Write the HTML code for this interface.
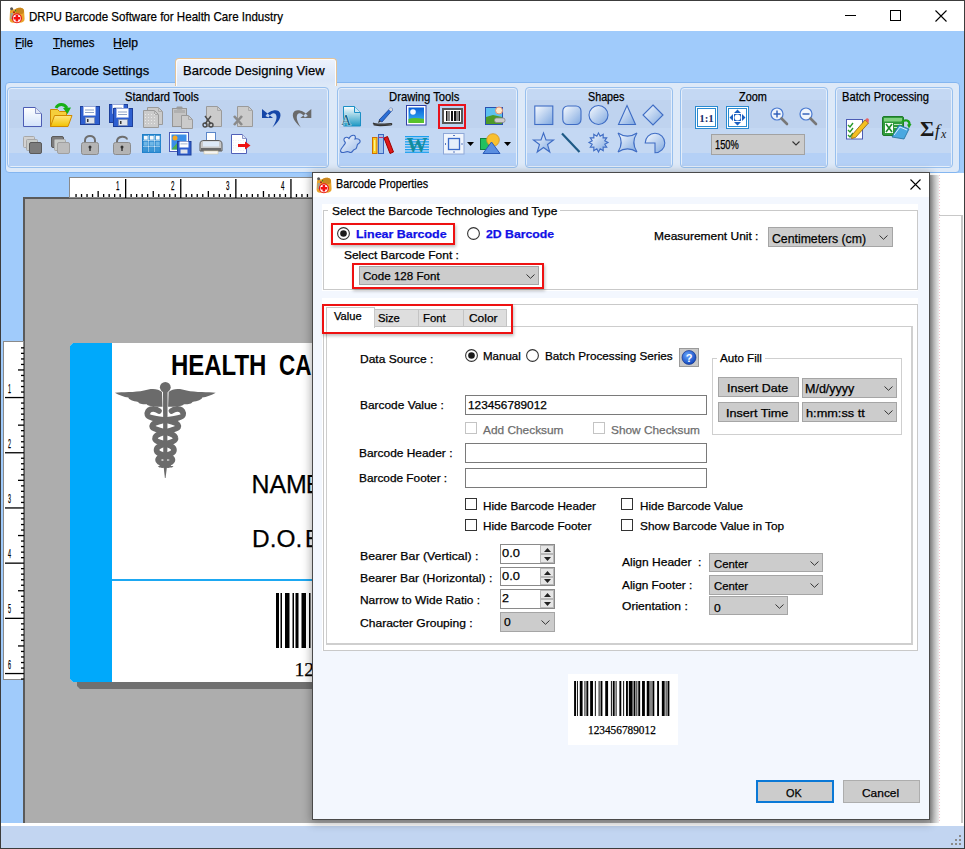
<!DOCTYPE html>
<html><head><meta charset="utf-8"><title>DRPU Barcode Software</title>
<style>
*{box-sizing:border-box;margin:0;padding:0}
html,body{width:965px;height:849px;overflow:hidden;background:#fff}
body{position:relative;font-family:"Liberation Sans",sans-serif;color:#000}
.a{position:absolute;overflow:visible}
.t{position:absolute;white-space:nowrap;line-height:1;transform-origin:0 0;-webkit-text-stroke:0.25px currentColor}
</style></head><body>
<div class="a" style="left:0px;top:0px;width:965px;height:849px;background:#fff"></div>
<div class="a" style="left:1px;top:31px;width:963px;height:793px;background:#a0cbfb"></div>
<div class="t" style="left:29.44px;top:8.74px;font:normal 13.48px 'Liberation Sans';color:#000;transform:scaleX(0.8588);">DRPU Barcode Software for Health Care Industry</div>
<svg class="a" style="left:9px;top:7px;" width="16" height="16" viewBox="0 0 16 16"><path d="M1 4.5C1 2.5 3 2 5 2.5L8 1.5C11 0 14 0.5 15 3L15.6 12C15.6 14.5 13.5 15.8 11 15.8H4C2 15.8 0.6 14.5 0.6 12.5Z" fill="#eaa52c"/>
<path d="M6 2.5C8 0.5 13 0 14.5 2.5 15.5 4.5 15 6.5 13 7L7 6.5Z" fill="#c9861e"/><rect x="1.5" y="6" width="2.5" height="6" fill="#8aa0b8" opacity="0.7"/>
<circle cx="2.6" cy="1.8" r="1.5" fill="#555"/><circle cx="5" cy="5.3" r="1" fill="#a02020"/><circle cx="6.5" cy="3.8" r="0.7" fill="#1a8a1a"/>
<circle cx="7.9" cy="11.3" r="5" fill="#e81818"/><circle cx="7.9" cy="11.3" r="3.9" fill="#fff"/>
<path d="M6.6 8H9.2V10H11.2V12.6H9.2V14.6H6.6V12.6H4.6V10H6.6Z" fill="#f40f0f"/></svg>
<div class="a" style="left:845px;top:15px;width:11px;height:1px;background:#000"></div>
<div class="a" style="left:890px;top:10px;width:11px;height:11px;border:1px solid #000"></div>
<svg class="a" style="left:935px;top:10px;" width="12" height="12" viewBox="0 0 12 12"><path d="M0.5 0.5L11.5 11.5M11.5 0.5L0.5 11.5" stroke="#000" stroke-width="1.1"/></svg>
<div class="t" style="left:15.41px;top:36.01px;font:normal 12.46px 'Liberation Sans';color:#000;transform:scaleX(0.8934);">File</div>
<div class="t" style="left:53.30px;top:36.01px;font:normal 12.46px 'Liberation Sans';color:#000;transform:scaleX(0.9205);">Themes</div>
<div class="t" style="left:113.33px;top:36.01px;font:normal 12.46px 'Liberation Sans';color:#000;transform:scaleX(0.9722);">Help</div>
<div class="a" style="left:16px;top:48px;width:6px;height:1px;background:#000"></div>
<div class="a" style="left:53px;top:48px;width:7px;height:1px;background:#000"></div>
<div class="a" style="left:114px;top:48px;width:8px;height:1px;background:#000"></div>
<div class="t" style="left:51.38px;top:64.18px;font:normal 12.61px 'Liberation Sans';color:#000;transform:scaleX(1.0219);">Barcode Settings</div>
<div class="a" style="left:5px;top:82px;width:955px;height:91px;background:#dde9f8;border:1px solid #84b6f0;border-radius:4px"></div>
<div class="a" style="left:175px;top:58px;width:162px;height:28px;background:linear-gradient(#eef3fc,#d8e5f8 80%,#dde9f8);border:1px solid #e2c39a;border-bottom:none;border-radius:4px 4px 0 0;box-shadow:inset 1px 1px 0 0 #fdfdfe,inset -1px 0 0 0 #fdfdfe"></div>
<div class="t" style="left:183.24px;top:63.32px;font:normal 13.62px 'Liberation Sans';color:#000;transform:scaleX(0.9565);">Barcode Designing View</div>
<div class="a" style="left:7px;top:87px;width:322px;height:81px;background:#c4d8f3;border:1px solid #98c0ee;border-radius:4px;box-shadow:inset 0 0 0 1px #e4eefa"></div>
<div class="a" style="left:9px;top:100px;width:318px;height:28px;background:#bfd3ef"></div>
<div class="a" style="left:9px;top:153px;width:318px;height:13px;background:#b4d0f6"></div>
<div class="a" style="left:337px;top:87px;width:181px;height:81px;background:#c4d8f3;border:1px solid #98c0ee;border-radius:4px;box-shadow:inset 0 0 0 1px #e4eefa"></div>
<div class="a" style="left:339px;top:100px;width:177px;height:28px;background:#bfd3ef"></div>
<div class="a" style="left:339px;top:153px;width:177px;height:13px;background:#b4d0f6"></div>
<div class="a" style="left:525px;top:87px;width:148px;height:81px;background:#c4d8f3;border:1px solid #98c0ee;border-radius:4px;box-shadow:inset 0 0 0 1px #e4eefa"></div>
<div class="a" style="left:527px;top:100px;width:144px;height:28px;background:#bfd3ef"></div>
<div class="a" style="left:527px;top:153px;width:144px;height:13px;background:#b4d0f6"></div>
<div class="a" style="left:680px;top:87px;width:148px;height:81px;background:#c4d8f3;border:1px solid #98c0ee;border-radius:4px;box-shadow:inset 0 0 0 1px #e4eefa"></div>
<div class="a" style="left:682px;top:100px;width:144px;height:28px;background:#bfd3ef"></div>
<div class="a" style="left:682px;top:153px;width:144px;height:13px;background:#b4d0f6"></div>
<div class="a" style="left:835px;top:87px;width:118px;height:81px;background:#c4d8f3;border:1px solid #98c0ee;border-radius:4px;box-shadow:inset 0 0 0 1px #e4eefa"></div>
<div class="a" style="left:837px;top:100px;width:114px;height:28px;background:#bfd3ef"></div>
<div class="a" style="left:837px;top:153px;width:114px;height:13px;background:#b4d0f6"></div>
<div class="t" style="left:125.00px;top:90.47px;font:normal 12.03px 'Liberation Sans';color:#000;transform:scaleX(0.9233);">Standard Tools</div>
<div class="t" style="left:388.60px;top:90.47px;font:normal 12.03px 'Liberation Sans';color:#000;transform:scaleX(0.9370);">Drawing Tools</div>
<div class="t" style="left:588.00px;top:90.47px;font:normal 12.03px 'Liberation Sans';color:#000;transform:scaleX(0.8934);">Shapes</div>
<div class="t" style="left:739.00px;top:90.47px;font:normal 12.03px 'Liberation Sans';color:#000;transform:scaleX(0.9054);">Zoom</div>
<div class="t" style="left:841.70px;top:90.47px;font:normal 12.03px 'Liberation Sans';color:#000;transform:scaleX(0.9298);">Batch Processing</div>
<svg class="a" style="left:22px;top:106px;" width="21" height="22" viewBox="0 0 21 22"><defs><linearGradient id="gdoc" x1="0" y1="0" x2="0" y2="1"><stop offset="0" stop-color="#fff"/><stop offset="1" stop-color="#d2e2fa"/></linearGradient></defs>
<path d="M1.5 1.5H13.5L19.5 7.5V20.5H1.5Z" fill="url(#gdoc)" stroke="#4c5cb4"/><path d="M13.5 1.5V7.5H19.5" fill="#dfe6f6" stroke="#8a96c8"/></svg>
<svg class="a" style="left:49px;top:103px;" width="24" height="25" viewBox="0 0 24 25"><defs><linearGradient id="gfold" x1="0" y1="0" x2="0" y2="1"><stop offset="0" stop-color="#ffe680"/><stop offset="1" stop-color="#f2c200"/></linearGradient></defs>
<path d="M1.5 6.5H8.5L10.5 8.5H17.5V23.5H1.5Z" fill="#f5cf3c" stroke="#d08a00"/>
<path d="M1.5 23.5L5.5 12.5H23L19 23.5Z" fill="url(#gfold)" stroke="#d08a00"/>
<path d="M7 5C9 0.5 15 0 18 5" stroke="#16b016" stroke-width="3" fill="none"/><path d="M14 5L22 4.5L18.5 11Z" fill="#16b016"/></svg>
<svg class="a" style="left:80px;top:106px;" width="21" height="20" viewBox="0 0 21 20"><rect x="0.5" y="0.5" width="19" height="18" fill="#2e5fd0" stroke="#1d3f9a"/><rect x="3.5" y="0.5" width="12" height="9" fill="#fff" stroke="#9fb4e8" stroke-width="0.5"/>
<rect x="5" y="3.5" width="9" height="1" fill="#8fa3c8"/><rect x="5" y="6" width="9" height="1" fill="#8fa3c8"/>
<rect x="5.5" y="11.5" width="9" height="6" fill="#dfe3ea" stroke="#7a8aa8" stroke-width="0.6"/><rect x="7" y="13" width="1.5" height="3" fill="#333"/></svg>
<svg class="a" style="left:109px;top:104px;" width="25" height="24" viewBox="0 0 25 24"><g><rect x="0.5" y="0.5" width="18" height="18" fill="#2e5fd0" stroke="#1d3f9a"/><rect x="3.5" y="0.5" width="11" height="9" fill="#fff" stroke="#9fb4e8" stroke-width="0.5"/>
<rect x="5" y="3.5" width="8" height="1" fill="#8fa3c8"/><rect x="5" y="6" width="8" height="1" fill="#8fa3c8"/>
<rect x="5.5" y="11.5" width="8" height="6" fill="#dfe3ea" stroke="#7a8aa8" stroke-width="0.6"/><rect x="7" y="13" width="1.5" height="3" fill="#333"/></g><g transform="translate(4,4)"><rect x="0.5" y="0.5" width="19" height="18" fill="#2e5fd0" stroke="#1d3f9a"/><rect x="3.5" y="0.5" width="12" height="9" fill="#fff" stroke="#9fb4e8" stroke-width="0.5"/>
<rect x="5" y="3.5" width="9" height="1" fill="#8fa3c8"/><rect x="5" y="6" width="9" height="1" fill="#8fa3c8"/>
<rect x="5.5" y="11.5" width="9" height="6" fill="#dfe3ea" stroke="#7a8aa8" stroke-width="0.6"/><rect x="7" y="13" width="1.5" height="3" fill="#333"/></g></svg>
<svg class="a" style="left:142px;top:107px;" width="22" height="22" viewBox="0 0 22 22"><path d="M5.5 0.5H16.5L20.5 4.5V17.5H5.5Z" fill="#cbcbcb" stroke="#9a9a9a"/><path d="M16.5 0.5V4.5H20.5" fill="none" stroke="#aaa"/><path d="M1.5 3.5H12.5L16.5 7.5V20.5H1.5Z" fill="#cbcbcb" stroke="#9a9a9a"/><path d="M12.5 3.5V7.5H16.5" fill="none" stroke="#aaa"/><g fill="#e8e8e8"><rect x="3" y="7" width="1" height="1"/><rect x="3" y="10" width="1" height="1"/><rect x="3" y="13" width="1" height="1"/><rect x="3" y="16" width="1" height="1"/><rect x="6" y="7" width="1" height="1"/><rect x="6" y="10" width="1" height="1"/><rect x="6" y="13" width="1" height="1"/><rect x="6" y="16" width="1" height="1"/><rect x="9" y="7" width="1" height="1"/><rect x="9" y="10" width="1" height="1"/><rect x="9" y="13" width="1" height="1"/><rect x="9" y="16" width="1" height="1"/><rect x="12" y="7" width="1" height="1"/><rect x="12" y="10" width="1" height="1"/><rect x="12" y="13" width="1" height="1"/><rect x="12" y="16" width="1" height="1"/></g></svg>
<svg class="a" style="left:171px;top:106px;" width="23" height="23" viewBox="0 0 23 23"><rect x="1.5" y="2.5" width="14" height="18" fill="#c4c4c4" stroke="#959595"/><rect x="5.5" y="0.5" width="6" height="3" rx="1" fill="#9a9a9a"/><rect x="3" y="4" width="11" height="3" fill="#b0b0b0"/><path d="M10.5 9.5H17.5L21.5 13.5V22.5H10.5Z" fill="#cbcbcb" stroke="#9a9a9a"/><path d="M17.5 9.5V13.5H21.5" fill="none" stroke="#aaa"/></svg>
<svg class="a" style="left:202px;top:105px;" width="22" height="23" viewBox="0 0 22 23"><path d="M4.5 1.5H15.5L19.5 5.5V21.5H4.5Z" fill="#cbcbcb" stroke="#9a9a9a"/><path d="M15.5 1.5V5.5H19.5" fill="none" stroke="#aaa"/><g stroke="#4a4a4a" stroke-width="1.4" fill="none"><path d="M3 11L9 19M9 11L3 19"/><circle cx="3" cy="20" r="2"/><circle cx="9" cy="20" r="2"/></g></svg>
<svg class="a" style="left:232px;top:105px;" width="22" height="23" viewBox="0 0 22 23"><path d="M5.5 1.5H16.5L20.5 5.5V21.5H5.5Z" fill="#cbcbcb" stroke="#9a9a9a"/><path d="M16.5 1.5V5.5H20.5" fill="none" stroke="#aaa"/><path d="M2 11L10 20M10 11L2 20" stroke="#8a8a8a" stroke-width="2.6"/></svg>
<svg class="a" style="left:260px;top:107px;" width="23" height="22" viewBox="0 0 23 22"><path d="M2 2V11H13Z M5.5 9C9.5 2.5 19 1 20.3 6.5C21.5 11.5 16.5 17 12.4 20.5C15 16.5 17.3 12 16.3 8.5C15.3 5.2 11.5 5.2 8.5 10.5Z" fill="#1546a8"/></svg>
<svg class="a" style="left:291px;top:107px;" width="23" height="22" viewBox="0 0 23 22"><path transform="translate(22.3,0) scale(-1,1)" d="M2 2V11H13Z M5.5 9C9.5 2.5 19 1 20.3 6.5C21.5 11.5 16.5 17 12.4 20.5C15 16.5 17.3 12 16.3 8.5C15.3 5.2 11.5 5.2 8.5 10.5Z" fill="#6a6a6a"/></svg>
<svg class="a" style="left:22px;top:135px;" width="21" height="20" viewBox="0 0 21 20"><rect x="1.5" y="1.5" width="11" height="11" rx="1" fill="#d2d2d2" stroke="#a8a8a8"/><rect x="4.5" y="4.5" width="11" height="11" rx="1" fill="#c8cbc8" stroke="#a8a8a8"/><rect x="7.5" y="7.5" width="12" height="11" rx="1.5" fill="#7c7c7c" stroke="#5a5a5a"/></svg>
<svg class="a" style="left:50px;top:135px;" width="21" height="20" viewBox="0 0 21 20"><rect x="1.5" y="1.5" width="12" height="11" rx="1.5" fill="#7c7c7c" stroke="#5a5a5a"/><rect x="4.5" y="4.5" width="11" height="11" rx="1" fill="#c8cbc8" stroke="#a8a8a8"/><rect x="7.5" y="7.5" width="12" height="11" rx="1.5" fill="#bdbdbd" stroke="#a0a0a0"/></svg>
<svg class="a" style="left:81px;top:135px;" width="19" height="21" viewBox="0 0 19 21"><path d="M4 8V5.5C4 -0.5 14 -0.5 14 5.5V8" stroke="#6e6e6e" stroke-width="2" fill="none"/><rect x="0.5" y="7.5" width="17" height="12" rx="2" fill="#b4b4b4" stroke="#8c8c8c"/><circle cx="9" cy="12" r="1.5" fill="#333"/><rect x="8.3" y="12" width="1.4" height="4" fill="#333"/></svg>
<svg class="a" style="left:113px;top:135px;" width="19" height="21" viewBox="0 0 19 21"><path d="M4 8V6.5C4 0.5 14 0.5 14 4.5" stroke="#6e6e6e" stroke-width="2" fill="none"/><rect x="0.5" y="7.5" width="17" height="12" rx="2" fill="#b4b4b4" stroke="#8c8c8c"/><circle cx="9" cy="12" r="1.5" fill="#333"/><rect x="8.3" y="12" width="1.4" height="4" fill="#333"/></svg>
<svg class="a" style="left:142px;top:134px;" width="20" height="20" viewBox="0 0 20 20"><rect x="0.5" y="0.5" width="18" height="18" fill="#fff" stroke="#1f7fc8"/><rect x="1.5" y="1.5" width="4.6" height="4.6" fill="#f4f8fc" stroke="#2787cf" stroke-width="0.8"/><rect x="7.5" y="1.5" width="4.6" height="4.6" fill="#f4f8fc" stroke="#2787cf" stroke-width="0.8"/><rect x="13.5" y="1.5" width="4.6" height="4.6" fill="#f4f8fc" stroke="#2787cf" stroke-width="0.8"/><rect x="1.5" y="7.5" width="4.6" height="4.6" fill="#6fb7e6" stroke="#2787cf" stroke-width="0.8"/><rect x="7.5" y="7.5" width="4.6" height="4.6" fill="#6fb7e6" stroke="#2787cf" stroke-width="0.8"/><rect x="13.5" y="7.5" width="4.6" height="4.6" fill="#6fb7e6" stroke="#2787cf" stroke-width="0.8"/><rect x="1.5" y="13.5" width="4.6" height="4.6" fill="#3a96d6" stroke="#2787cf" stroke-width="0.8"/><rect x="7.5" y="13.5" width="4.6" height="4.6" fill="#3a96d6" stroke="#2787cf" stroke-width="0.8"/><rect x="13.5" y="13.5" width="4.6" height="4.6" fill="#3a96d6" stroke="#2787cf" stroke-width="0.8"/></svg>
<svg class="a" style="left:169px;top:132px;" width="23" height="24" viewBox="0 0 23 24"><rect x="0.5" y="0.5" width="19" height="19" fill="#fff" stroke="#4a5ab8"/><rect x="2.5" y="2.5" width="15" height="15" fill="#3b8ee8"/><circle cx="6" cy="6" r="2.5" fill="#f5a623"/><path d="M2.5 17.5L8 11 12 15 17.5 10V17.5Z" fill="#4caf50"/><g transform="translate(8,9)"><rect x="0.5" y="0.5" width="13.5" height="13.5" fill="#2e5fd0" stroke="#1d3f9a"/><rect x="2.5" y="0.5" width="9" height="6" fill="#fff"/><rect x="3.5" y="2.5" width="7" height="0.8" fill="#8fa3c8"/><rect x="3.5" y="8.5" width="7" height="4" fill="#dfe3ea"/></g></svg>
<svg class="a" style="left:199px;top:132px;" width="25" height="24" viewBox="0 0 25 24"><rect x="7.5" y="0.5" width="9" height="8" fill="#fff" stroke="#5b87c9"/><path d="M1 19V12C1 9 3 8.5 5 8.5H19C21 8.5 23 9 23 12V19Z" fill="#c8c8c8" stroke="#5a5a5a"/>
<rect x="4" y="9.5" width="16" height="5" fill="#dde9f7"/><rect x="2" y="16" width="20" height="3" fill="#6b6b6b"/><rect x="5" y="19" width="14" height="3" fill="#f5f5f5" stroke="#d8c8a0" stroke-width="0.6"/></svg>
<svg class="a" style="left:230px;top:133px;" width="22" height="22" viewBox="0 0 22 22"><path d="M1.5 1.5H12.5L16.5 5.5V20.5H1.5Z" fill="#fff" stroke="#5060b8"/><path d="M12.5 1.5V5.5H16.5" fill="#dfe6f6" stroke="#8a96c8"/><g fill="#e0e4f0"><rect x="3.0" y="7.0" width="0.8" height="0.8"/><rect x="3.0" y="9.5" width="0.8" height="0.8"/><rect x="3.0" y="12.0" width="0.8" height="0.8"/><rect x="3.0" y="14.5" width="0.8" height="0.8"/><rect x="3.0" y="17.0" width="0.8" height="0.8"/><rect x="5.5" y="7.0" width="0.8" height="0.8"/><rect x="5.5" y="9.5" width="0.8" height="0.8"/><rect x="5.5" y="12.0" width="0.8" height="0.8"/><rect x="5.5" y="14.5" width="0.8" height="0.8"/><rect x="5.5" y="17.0" width="0.8" height="0.8"/><rect x="8.0" y="7.0" width="0.8" height="0.8"/><rect x="8.0" y="9.5" width="0.8" height="0.8"/><rect x="8.0" y="12.0" width="0.8" height="0.8"/><rect x="8.0" y="14.5" width="0.8" height="0.8"/><rect x="8.0" y="17.0" width="0.8" height="0.8"/><rect x="10.5" y="7.0" width="0.8" height="0.8"/><rect x="10.5" y="9.5" width="0.8" height="0.8"/><rect x="10.5" y="12.0" width="0.8" height="0.8"/><rect x="10.5" y="14.5" width="0.8" height="0.8"/><rect x="10.5" y="17.0" width="0.8" height="0.8"/><rect x="13.0" y="7.0" width="0.8" height="0.8"/><rect x="13.0" y="9.5" width="0.8" height="0.8"/><rect x="13.0" y="12.0" width="0.8" height="0.8"/><rect x="13.0" y="14.5" width="0.8" height="0.8"/><rect x="13.0" y="17.0" width="0.8" height="0.8"/></g><path d="M8 11H15V8.5L20.5 12.5 15 16.5V14H8Z" fill="#ee1111"/></svg>
<svg class="a" style="left:340px;top:105px;" width="23" height="23" viewBox="0 0 23 23"><defs><linearGradient id="gta" x1="0" y1="0" x2="0" y2="1"><stop offset="0" stop-color="#fff"/><stop offset="1" stop-color="#1f9ac4"/></linearGradient></defs>
<path d="M3.5 1.5H14.5L20.5 7.5V21H3.5Z" fill="url(#gta)" stroke="#1b8fc4"/><path d="M14.5 1.5V7.5H20.5" fill="#cde8f5" stroke="#1b8fc4"/>
<text x="1" y="20" font-family="Liberation Serif" font-size="14" fill="#0e5f86" stroke="#fff" stroke-width="0.6" paint-order="stroke">A</text></svg>
<svg class="a" style="left:372px;top:106px;" width="23" height="21" viewBox="0 0 23 21"><path d="M7 14L18 2.5C19 1.5 21 2.5 20.5 4L10 16Z" fill="#2a6fd6" stroke="#1a3f90" stroke-width="0.8"/><path d="M18 2.5C19 1.5 21 2.5 20.5 4L19 5.5 16.8 3.5Z" fill="#ddd"/>
<path d="M7 14L6 17 9 15.5" fill="#333"/><path d="M1 17C3 18.5 8 18.5 19 17.5C20 17.4 20 18.6 19 18.8C10 19.8 3 19.5 1.5 18.5" stroke="#333" stroke-width="1.2" fill="#888"/></svg>
<svg class="a" style="left:406px;top:105px;" width="21" height="21" viewBox="0 0 21 21"><defs><linearGradient id="gsky" x1="0" y1="0" x2="0" y2="1"><stop offset="0" stop-color="#0a5fd8"/><stop offset="1" stop-color="#35b6f5"/></linearGradient></defs>
<rect x="0.5" y="0.5" width="19.5" height="19.5" fill="#fff" stroke="#3040a8"/><rect x="2.5" y="2.5" width="15.5" height="15.5" fill="url(#gsky)"/><circle cx="7" cy="7" r="2.8" fill="#f4f8ff"/><path d="M2.5 14C7 12.5 12 13 18 14V18H2.5Z" fill="#58c22c"/></svg>
<div class="a" style="left:438px;top:104px;width:28px;height:25px;border:2px solid #e8121c;background:#bcd4f0"></div>
<svg class="a" style="left:442px;top:108px;" width="21" height="16" viewBox="0 0 21 16"><rect x="1" y="1" width="19" height="14" fill="#fff" stroke="#555" stroke-width="2"/><rect x="4" y="3" width="1.5" height="10" fill="#111"/><rect x="6.5" y="3" width="1" height="10" fill="#111"/><rect x="9" y="3" width="2" height="10" fill="#111"/><rect x="12" y="3" width="2.5" height="10" fill="#111"/><rect x="15.5" y="3" width="1" height="10" fill="#111"/><rect x="17" y="3" width="1" height="10" fill="#111"/></svg>
<svg class="a" style="left:484px;top:106px;" width="22" height="20" viewBox="0 0 22 20"><rect x="1.5" y="1.5" width="17" height="17" fill="#5dc0ef" stroke="#2850b0"/><path d="M2 11L9 9 18 11V18H2Z" fill="#4c9a28"/><circle cx="15" cy="4.5" r="3.5" fill="#fde8c8" stroke="#e89070"/><rect x="10.5" y="12" width="10.5" height="4.5" rx="2" fill="#ccc" stroke="#888" stroke-width="0.8"/></svg>
<svg class="a" style="left:339px;top:133px;" width="24" height="22" viewBox="0 0 24 22"><defs><linearGradient id="gblob" x1="0" y1="0" x2="1" y2="1"><stop offset="0" stop-color="#f4f8ff"/><stop offset="1" stop-color="#9fbde8"/></linearGradient></defs>
<path d="M6 9C3 6 7 2.5 10 5.5C12 1 18 1 16 6C21 5 23 9 19 11C17 12.5 19 16 15.5 16.5C13 17 14 21 10 19C7 17.5 4 21 2 19C0 17 4 14 5 12C6 11 7 10 6 9Z" fill="url(#gblob)" stroke="#3a66c0" stroke-width="1.1"/></svg>
<svg class="a" style="left:370px;top:133px;" width="25" height="22" viewBox="0 0 25 22"><rect x="2.5" y="4.5" width="4.5" height="16" fill="#f8d020" stroke="#d07000"/><rect x="4.2" y="7" width="1" height="11" fill="#fff7b0"/><rect x="8.5" y="1.5" width="5" height="19" fill="#9ec0ec" stroke="#3a66c0"/><rect x="8.8" y="4" width="4.4" height="1" fill="#c03070"/>
<path d="M14 5L17.5 3.5 23.5 19 20 20.5Z" fill="#e01818" stroke="#900"/></svg>
<svg class="a" style="left:405px;top:134px;" width="24" height="20" viewBox="0 0 24 20"><rect x="0" y="2.0" width="24" height="1.3" fill="#1aa0f0"/><rect x="0" y="4.6" width="24" height="1.3" fill="#1aa0f0"/><rect x="0" y="7.2" width="24" height="1.3" fill="#1aa0f0"/><rect x="0" y="9.8" width="24" height="1.3" fill="#1aa0f0"/><rect x="0" y="12.4" width="24" height="1.3" fill="#1aa0f0"/><rect x="0" y="15.0" width="24" height="1.3" fill="#1aa0f0"/><rect x="0" y="17.6" width="24" height="1.3" fill="#1aa0f0"/><text x="12" y="18" text-anchor="middle" font-family="Liberation Serif" font-weight="bold" font-size="21" fill="#138c9c">W</text></svg>
<svg class="a" style="left:443px;top:133px;" width="22" height="22" viewBox="0 0 22 22"><rect x="0.5" y="0.5" width="20.5" height="20.5" fill="#f0f5fc" stroke="#8fa8d8"/><rect x="5.5" y="5.5" width="11" height="11" fill="#e4eefa" stroke="#3a6ac8" stroke-width="1.3"/>
<rect x="10" y="2" width="2" height="1" fill="#5a7ac0"/><rect x="10" y="18.5" width="2" height="1" fill="#5a7ac0"/><rect x="2" y="10" width="1" height="2" fill="#5a7ac0"/><rect x="18.5" y="10" width="1" height="2" fill="#5a7ac0"/></svg>
<svg class="a" style="left:467px;top:142px;" width="7" height="4" viewBox="0 0 7 4"><path d="M0 0H7L3.5 4Z" fill="#000"/></svg>
<svg class="a" style="left:480px;top:133px;" width="21" height="22" viewBox="0 0 21 22"><rect x="0.5" y="5.5" width="8" height="11" fill="#22c060" stroke="#108040"/><circle cx="13" cy="7" r="6.3" fill="#f8c030" stroke="#d09020" stroke-width="0.8"/>
<path d="M3 20.5L11.5 9 20 20.5Z" fill="#5a8ee0" stroke="#2a5ab8"/></svg>
<svg class="a" style="left:504px;top:142px;" width="7" height="4" viewBox="0 0 7 4"><path d="M0 0H7L3.5 4Z" fill="#000"/></svg>
<svg class="a" style="left:534px;top:105px;" width="20" height="21" viewBox="0 0 20 21"><defs><linearGradient id="gsh" x1="0" y1="0" x2="1" y2="1"><stop offset="0" stop-color="#f8fbff"/><stop offset="1" stop-color="#7fa8e0"/></linearGradient></defs><rect x="0.8" y="1" width="18" height="18.5" fill="url(#gsh)" stroke="#3e6cc4" stroke-width="1.1"/></svg>
<svg class="a" style="left:562px;top:105px;" width="20" height="21" viewBox="0 0 20 21"><rect x="0.8" y="1" width="18.2" height="18.5" rx="5" fill="url(#gsh)" stroke="#3e6cc4" stroke-width="1.1"/></svg>
<svg class="a" style="left:588px;top:104px;" width="21" height="22" viewBox="0 0 21 22"><circle cx="10.5" cy="11" r="9.5" fill="url(#gsh)" stroke="#3e6cc4" stroke-width="1.1"/></svg>
<svg class="a" style="left:617px;top:104px;" width="20" height="22" viewBox="0 0 20 22"><path d="M10 1.5L18.5 20.5H1.5Z" fill="url(#gsh)" stroke="#3e6cc4" stroke-width="1.1"/></svg>
<svg class="a" style="left:642px;top:104px;" width="22" height="22" viewBox="0 0 22 22"><path d="M11 1L21 11 11 21 1 11Z" fill="url(#gsh)" stroke="#3e6cc4" stroke-width="1.1"/></svg>
<svg class="a" style="left:533px;top:132px;" width="21" height="21" viewBox="0 0 21 21"><path d="M10.5 1L13 8H20.5L14.5 12.5 16.8 20 10.5 15.5 4.2 20 6.5 12.5 0.5 8H8Z" fill="url(#gsh)" stroke="#3e6cc4" stroke-width="1.1"/></svg>
<svg class="a" style="left:560px;top:132px;" width="21" height="21" viewBox="0 0 21 21"><path d="M2 1.5L19.5 20" stroke="#1e5a86" stroke-width="2.2"/></svg>
<svg class="a" style="left:588px;top:132px;" width="21" height="21" viewBox="0 0 21 21"><polygon points="10.50,1.00 12.18,4.22 15.25,2.27 15.10,5.90 18.73,5.75 16.78,8.82 20.00,10.50 16.78,12.18 18.73,15.25 15.10,15.10 15.25,18.73 12.18,16.78 10.50,20.00 8.82,16.78 5.75,18.73 5.90,15.10 2.27,15.25 4.22,12.18 1.00,10.50 4.22,8.82 2.27,5.75 5.90,5.90 5.75,2.27 8.82,4.22" fill="url(#gsh)" stroke="#3e6cc4" stroke-width="1.1"/></svg>
<svg class="a" style="left:617px;top:132px;" width="21" height="21" viewBox="0 0 21 21"><path d="M1 1C7 5 14 5 20 1 16 7 16 14 20 20 14 16 7 16 1 20 5 14 5 7 1 1Z" fill="url(#gsh)" stroke="#3e6cc4" stroke-width="1.1"/></svg>
<svg class="a" style="left:644px;top:132px;" width="22" height="22" viewBox="0 0 22 22"><path d="M1.2 11A9.8 9.8 0 1 1 11 20.8V11Z" fill="url(#gsh)" stroke="#3e6cc4" stroke-width="1.1"/></svg>
<svg class="a" style="left:695px;top:106px;" width="24" height="24" viewBox="0 0 24 24"><rect x="0.5" y="0.5" width="22" height="22" fill="#fff" stroke="#2a8ad0"/><rect x="2.5" y="2.5" width="18" height="18" fill="#fff" stroke="#2a8ad0"/>
<text x="11.5" y="16" text-anchor="middle" font-family="Liberation Serif" font-weight="bold" font-size="11" fill="#1a2f6a">1:1</text></svg>
<svg class="a" style="left:726px;top:106px;" width="24" height="24" viewBox="0 0 24 24"><rect x="0.5" y="0.5" width="22" height="22" fill="#fff" stroke="#2a8ad0"/><rect x="2.5" y="2.5" width="18" height="18" fill="#fff" stroke="#2a8ad0"/>
<path d="M11.5 3.5L15 7H8Z M11.5 19.5L15 16H8Z M3.5 11.5L7 8V15Z M19.5 11.5L16 8V15Z" fill="#1a5fc0"/><rect x="8" y="8" width="7" height="7" fill="#1a5fc0"/><circle cx="11.5" cy="11.5" r="3" fill="#fff"/></svg>
<svg class="a" style="left:770px;top:107px;" width="19" height="19" viewBox="0 0 19 19"><circle cx="7" cy="7" r="6" fill="#eef4fc" stroke="#4a7ad0" stroke-width="1.2"/><path d="M11.5 11.5L17 17" stroke="#777" stroke-width="2.6" stroke-linecap="round"/><rect x="3.5" y="6.3" width="7" height="1.4" fill="#2a5ab8"/><rect x="6.3" y="3.5" width="1.4" height="7" fill="#2a5ab8"/></svg>
<svg class="a" style="left:799px;top:107px;" width="19" height="19" viewBox="0 0 19 19"><circle cx="7" cy="7" r="6" fill="#eef4fc" stroke="#4a7ad0" stroke-width="1.2"/><path d="M11.5 11.5L17 17" stroke="#777" stroke-width="2.6" stroke-linecap="round"/><rect x="3.5" y="6.3" width="7" height="1.4" fill="#2a5ab8"/></svg>
<div class="a" style="left:711px;top:134px;width:94px;height:21px;background:#cccccc;border:1px solid #a2a2a2"></div>
<div class="t" style="left:715.00px;top:137.16px;font:normal 12.75px 'Liberation Sans';color:#000;transform:scaleX(0.7282);">150%</div>
<svg class="a" style="left:792px;top:141px;" width="8" height="5" viewBox="0 0 8 5"><path d="M0.5 0.5L4 4 7.5 0.5" stroke="#333" fill="none" stroke-width="1.1"/></svg>
<svg class="a" style="left:845px;top:116px;" width="25" height="24" viewBox="0 0 25 24"><rect x="1.5" y="3.5" width="16" height="19.5" fill="#fff" stroke="#4c5cb4"/><path d="M3 9L5 11 8 7M3 14L5 16 8 12M3 19L5 21 8 17" stroke="#2a9a2a" stroke-width="1.4" fill="none"/>
<path d="M7 19L20 4 23.5 7 10.5 21.5 6.5 22.5Z" fill="#f4c020" stroke="#8a6010" stroke-width="0.8"/><path d="M20 4L21.5 2.5C22.5 1.5 24.5 3 23.8 4.5L23.5 7Z" fill="#e86060"/></svg>
<svg class="a" style="left:882px;top:116px;" width="30" height="24" viewBox="0 0 30 24"><rect x="0.5" y="0.5" width="21" height="19" rx="1.5" fill="#2f9a3a" stroke="#1e7a2a"/><rect x="2" y="2" width="18" height="3.5" fill="#7fd07f"/>
<rect x="3" y="7" width="8" height="10" fill="#fff"/><path d="M4 8L10 16M10 8L4 16" stroke="#1e8a2a" stroke-width="1.6"/><rect x="12" y="8" width="8" height="1" fill="#bfe8bf"/><rect x="12" y="11" width="8" height="1" fill="#bfe8bf"/>
<path d="M10 21L17 9 27 13 22 23Z" fill="#4aa8e0" stroke="#1f6f9c" stroke-width="0.8"/><path d="M12 19L18 11 25 14" stroke="#d8f0ff" stroke-width="1" fill="none"/><path d="M20 6C23 3 28 4 27.5 9" stroke="#1aa01a" stroke-width="2.2" fill="none"/><path d="M25 8.5L29.5 8 27 12.5Z" fill="#1aa01a"/></svg>
<svg class="a" style="left:919px;top:116px;" width="32" height="24" viewBox="0 0 32 24"><text x="1" y="20" font-family="Liberation Serif" font-weight="bold" font-size="22" fill="#1a1a1a">&#931;</text><text x="16" y="20" font-family="Liberation Serif" font-style="italic" font-size="17" fill="#1a1a1a">f</text><text x="22" y="22" font-family="Liberation Serif" font-style="italic" font-size="12" fill="#1a1a1a">x</text></svg>
<div class="a" style="left:23px;top:197px;width:907px;height:626px;background:#adadad;border-left:2px solid #5a5a5a;border-top:2px solid #5a5a5a"></div>
<svg class="a" style="left:69px;top:177px;" width="262" height="21" viewBox="0 0 262 21"><rect x="0.5" y="0.5" width="260" height="20" fill="#fff" stroke="#8a8a8a"/><rect x="6.4" y="17" width="1.3" height="3" fill="#000"/><rect x="11.9" y="17" width="1.3" height="3" fill="#000"/><rect x="17.4" y="17" width="1.3" height="3" fill="#000"/><rect x="22.9" y="17" width="1.3" height="3" fill="#000"/><rect x="28.5" y="14" width="1.3" height="6" fill="#000"/><rect x="34.0" y="17" width="1.3" height="3" fill="#000"/><rect x="39.5" y="17" width="1.3" height="3" fill="#000"/><rect x="45.0" y="17" width="1.3" height="3" fill="#000"/><rect x="50.5" y="17" width="1.3" height="3" fill="#000"/><rect x="56.0" y="2" width="1.3" height="19" fill="#000"/><rect x="61.5" y="17" width="1.3" height="3" fill="#000"/><rect x="67.0" y="17" width="1.3" height="3" fill="#000"/><rect x="72.5" y="17" width="1.3" height="3" fill="#000"/><rect x="78.0" y="17" width="1.3" height="3" fill="#000"/><rect x="83.6" y="14" width="1.3" height="6" fill="#000"/><rect x="89.1" y="17" width="1.3" height="3" fill="#000"/><rect x="94.6" y="17" width="1.3" height="3" fill="#000"/><rect x="100.1" y="17" width="1.3" height="3" fill="#000"/><rect x="105.6" y="17" width="1.3" height="3" fill="#000"/><rect x="111.1" y="2" width="1.3" height="19" fill="#000"/><rect x="116.6" y="17" width="1.3" height="3" fill="#000"/><rect x="122.1" y="17" width="1.3" height="3" fill="#000"/><rect x="127.6" y="17" width="1.3" height="3" fill="#000"/><rect x="133.1" y="17" width="1.3" height="3" fill="#000"/><rect x="138.7" y="14" width="1.3" height="6" fill="#000"/><rect x="144.2" y="17" width="1.3" height="3" fill="#000"/><rect x="149.7" y="17" width="1.3" height="3" fill="#000"/><rect x="155.2" y="17" width="1.3" height="3" fill="#000"/><rect x="160.7" y="17" width="1.3" height="3" fill="#000"/><rect x="166.2" y="2" width="1.3" height="19" fill="#000"/><rect x="171.7" y="17" width="1.3" height="3" fill="#000"/><rect x="177.2" y="17" width="1.3" height="3" fill="#000"/><rect x="182.7" y="17" width="1.3" height="3" fill="#000"/><rect x="188.2" y="17" width="1.3" height="3" fill="#000"/><rect x="193.8" y="14" width="1.3" height="6" fill="#000"/><rect x="199.3" y="17" width="1.3" height="3" fill="#000"/><rect x="204.8" y="17" width="1.3" height="3" fill="#000"/><rect x="210.3" y="17" width="1.3" height="3" fill="#000"/><rect x="215.8" y="17" width="1.3" height="3" fill="#000"/><rect x="221.3" y="2" width="1.3" height="19" fill="#000"/><rect x="226.8" y="17" width="1.3" height="3" fill="#000"/><rect x="232.3" y="17" width="1.3" height="3" fill="#000"/><rect x="237.8" y="17" width="1.3" height="3" fill="#000"/><rect x="243.3" y="17" width="1.3" height="3" fill="#000"/><rect x="248.9" y="14" width="1.3" height="6" fill="#000"/><rect x="254.4" y="17" width="1.3" height="3" fill="#000"/><rect x="259.9" y="17" width="1.3" height="3" fill="#000"/></svg>
<div class="t" style="left:116.00px;top:179.37px;font:normal 12.03px 'Liberation Sans';color:#000;transform:scaleX(0.5143);">1</div>
<div class="t" style="left:171.10px;top:179.37px;font:normal 12.03px 'Liberation Sans';color:#000;transform:scaleX(0.5143);">2</div>
<div class="t" style="left:226.20px;top:179.37px;font:normal 12.03px 'Liberation Sans';color:#000;transform:scaleX(0.5143);">3</div>
<div class="t" style="left:281.30px;top:179.37px;font:normal 12.03px 'Liberation Sans';color:#000;transform:scaleX(0.5143);">4</div>
<svg class="a" style="left:3px;top:341px;" width="21" height="338" viewBox="0 0 21 338"><rect x="0.5" y="0.5" width="20" height="338" fill="#fff" stroke="#8a8a8a"/><rect x="18" y="6.2" width="3" height="1.3" fill="#000"/><rect x="18" y="11.7" width="3" height="1.3" fill="#000"/><rect x="18" y="17.3" width="3" height="1.3" fill="#000"/><rect x="18" y="22.8" width="3" height="1.3" fill="#000"/><rect x="15" y="28.3" width="6" height="1.3" fill="#000"/><rect x="18" y="33.8" width="3" height="1.3" fill="#000"/><rect x="18" y="39.3" width="3" height="1.3" fill="#000"/><rect x="18" y="44.9" width="3" height="1.3" fill="#000"/><rect x="18" y="50.4" width="3" height="1.3" fill="#000"/><rect x="2" y="55.9" width="19" height="1.3" fill="#000"/><rect x="18" y="61.4" width="3" height="1.3" fill="#000"/><rect x="18" y="66.9" width="3" height="1.3" fill="#000"/><rect x="18" y="72.5" width="3" height="1.3" fill="#000"/><rect x="18" y="78.0" width="3" height="1.3" fill="#000"/><rect x="15" y="83.5" width="6" height="1.3" fill="#000"/><rect x="18" y="89.0" width="3" height="1.3" fill="#000"/><rect x="18" y="94.5" width="3" height="1.3" fill="#000"/><rect x="18" y="100.1" width="3" height="1.3" fill="#000"/><rect x="18" y="105.6" width="3" height="1.3" fill="#000"/><rect x="2" y="111.1" width="19" height="1.3" fill="#000"/><rect x="18" y="116.6" width="3" height="1.3" fill="#000"/><rect x="18" y="122.1" width="3" height="1.3" fill="#000"/><rect x="18" y="127.7" width="3" height="1.3" fill="#000"/><rect x="18" y="133.2" width="3" height="1.3" fill="#000"/><rect x="15" y="138.7" width="6" height="1.3" fill="#000"/><rect x="18" y="144.2" width="3" height="1.3" fill="#000"/><rect x="18" y="149.7" width="3" height="1.3" fill="#000"/><rect x="18" y="155.3" width="3" height="1.3" fill="#000"/><rect x="18" y="160.8" width="3" height="1.3" fill="#000"/><rect x="2" y="166.3" width="19" height="1.3" fill="#000"/><rect x="18" y="171.8" width="3" height="1.3" fill="#000"/><rect x="18" y="177.3" width="3" height="1.3" fill="#000"/><rect x="18" y="182.9" width="3" height="1.3" fill="#000"/><rect x="18" y="188.4" width="3" height="1.3" fill="#000"/><rect x="15" y="193.9" width="6" height="1.3" fill="#000"/><rect x="18" y="199.4" width="3" height="1.3" fill="#000"/><rect x="18" y="204.9" width="3" height="1.3" fill="#000"/><rect x="18" y="210.5" width="3" height="1.3" fill="#000"/><rect x="18" y="216.0" width="3" height="1.3" fill="#000"/><rect x="2" y="221.5" width="19" height="1.3" fill="#000"/><rect x="18" y="227.0" width="3" height="1.3" fill="#000"/><rect x="18" y="232.5" width="3" height="1.3" fill="#000"/><rect x="18" y="238.1" width="3" height="1.3" fill="#000"/><rect x="18" y="243.6" width="3" height="1.3" fill="#000"/><rect x="15" y="249.1" width="6" height="1.3" fill="#000"/><rect x="18" y="254.6" width="3" height="1.3" fill="#000"/><rect x="18" y="260.1" width="3" height="1.3" fill="#000"/><rect x="18" y="265.7" width="3" height="1.3" fill="#000"/><rect x="18" y="271.2" width="3" height="1.3" fill="#000"/><rect x="2" y="276.7" width="19" height="1.3" fill="#000"/><rect x="18" y="282.2" width="3" height="1.3" fill="#000"/><rect x="18" y="287.7" width="3" height="1.3" fill="#000"/><rect x="18" y="293.3" width="3" height="1.3" fill="#000"/><rect x="18" y="298.8" width="3" height="1.3" fill="#000"/><rect x="15" y="304.3" width="6" height="1.3" fill="#000"/><rect x="18" y="309.8" width="3" height="1.3" fill="#000"/><rect x="18" y="315.3" width="3" height="1.3" fill="#000"/><rect x="18" y="320.9" width="3" height="1.3" fill="#000"/><rect x="18" y="326.4" width="3" height="1.3" fill="#000"/><rect x="2" y="331.9" width="19" height="1.3" fill="#000"/><rect x="18" y="337.4" width="3" height="1.3" fill="#000"/></svg>
<div class="t" style="left:8.40px;top:381.66px;font:normal 12.17px 'Liberation Sans';color:#000;transform:scaleX(0.4429);">1</div>
<div class="t" style="left:8.40px;top:436.86px;font:normal 12.17px 'Liberation Sans';color:#000;transform:scaleX(0.4429);">2</div>
<div class="t" style="left:8.40px;top:492.06px;font:normal 12.17px 'Liberation Sans';color:#000;transform:scaleX(0.4429);">3</div>
<div class="t" style="left:8.40px;top:547.26px;font:normal 12.17px 'Liberation Sans';color:#000;transform:scaleX(0.4429);">4</div>
<div class="t" style="left:8.40px;top:602.46px;font:normal 12.17px 'Liberation Sans';color:#000;transform:scaleX(0.4429);">5</div>
<div class="t" style="left:8.40px;top:657.66px;font:normal 12.17px 'Liberation Sans';color:#000;transform:scaleX(0.4429);">6</div>
<div class="a" style="left:77px;top:350px;width:400px;height:339px;background:#707070;clip-path:polygon(3px 0,100% 0,100% 100%,3px 100%,0 calc(100% - 3px),0 3px)"></div>
<div class="a" style="left:70px;top:343px;width:400px;height:339px;background:#fff;clip-path:polygon(3px 0,100% 0,100% 100%,3px 100%,0 calc(100% - 3px),0 3px)"></div>
<div class="a" style="left:70px;top:343px;width:42px;height:339px;background:#00a9fb;clip-path:polygon(3px 0,100% 0,100% 100%,3px 100%,0 calc(100% - 3px),0 3px)"></div>
<div class="a" style="left:112px;top:579px;width:360px;height:2px;background:#1da8f2"></div>
<div class="t" style="left:170.58px;top:347.89px;font:bold 29.42px 'Liberation Sans';color:#000;transform:scaleX(0.8151);-webkit-text-stroke:0;">HEALTH</div>
<div class="t" style="left:279.44px;top:347.89px;font:bold 29.42px 'Liberation Sans';color:#000;transform:scaleX(0.7639);-webkit-text-stroke:0;">CA</div>
<div class="t" style="left:251.50px;top:470.11px;font:normal 24.93px 'Liberation Sans';color:#000;">NAM</div>
<div class="t" style="left:305.71px;top:470.11px;font:normal 24.93px 'Liberation Sans';color:#000;transform:scaleX(0.8929);">E</div>
<div class="t" style="left:252.47px;top:525.30px;font:normal 23.77px 'Liberation Sans';color:#000;transform:scaleX(1.0270);">D.O.</div>
<div class="t" style="left:304.54px;top:525.30px;font:normal 23.77px 'Liberation Sans';color:#000;transform:scaleX(0.9643);">B</div>
<div class="t" style="left:294.40px;top:658.06px;font:normal 19.69px 'Liberation Serif';color:#000;">12</div>
<svg class="a" style="left:110px;top:378px;" width="112" height="104" viewBox="0 0 112 104"><g fill="#6b6b6b">
<circle cx="55.3" cy="9.3" r="5.4"/>
<path d="M53 12H57.6L57.3 86L55.6 100 54.9 100 53.3 86Z"/>
<path d="M52 14C48 10 40 10.5 34 12.5C25 14.5 12 14 4.9 14.7C9 17 14 19 18.4 19.6C18.5 21.5 23 23.5 28.2 23.9C28.5 25.5 33 26.5 36.8 26.3C37 28 44 29 52.5 28.8Z"/>
<path transform="translate(110.6,0) scale(-1,1)" d="M52 14C48 10 40 10.5 34 12.5C25 14.5 12 14 4.9 14.7C9 17 14 19 18.4 19.6C18.5 21.5 23 23.5 28.2 23.9C28.5 25.5 33 26.5 36.8 26.3C37 28 44 29 52.5 28.8Z"/>
<path d="M47.8 88L63.5 88 62 89.6 49.3 89.6Z"/>
</g>
<g fill="none" stroke="#6b6b6b" stroke-width="5.6" stroke-linecap="round">
<path d="M49 33C44 29 36 31 37.5 37C39 42 64 41 68 47C72 53 46 53 45 60C44 66 64 65 64 72C64 78 48 77 48 82C48 86 57 86 58 87"/>
<path d="M61.5 33C66.5 29 74.5 31 73 37C71.5 42 46.5 41 42.5 47C38.5 53 64.5 53 65.5 60C66.5 66 46.5 65 46.5 72C46.5 78 62.5 77 62.5 82C62.5 86 53.5 86 52.5 87"/>
</g></svg>
<svg class="a" style="left:0px;top:0px;pointer-events:none" width="965" height="849" viewBox="0 0 965 849"><rect x="276.00" y="593" width="3.00" height="55" fill="#000"/><rect x="280.50" y="593" width="1.50" height="55" fill="#000"/><rect x="285.00" y="593" width="4.50" height="55" fill="#000"/><rect x="292.50" y="593" width="1.50" height="55" fill="#000"/><rect x="295.50" y="593" width="3.00" height="55" fill="#000"/><rect x="301.50" y="593" width="4.50" height="55" fill="#000"/><rect x="309.00" y="593" width="1.50" height="55" fill="#000"/><rect x="315.00" y="593" width="1.50" height="55" fill="#000"/><rect x="318.00" y="593" width="3.00" height="55" fill="#000"/><rect x="325.50" y="593" width="4.50" height="55" fill="#000"/><rect x="334.50" y="593" width="1.50" height="55" fill="#000"/><rect x="337.50" y="593" width="3.00" height="55" fill="#000"/><rect x="342.00" y="593" width="1.50" height="55" fill="#000"/><rect x="348.00" y="593" width="3.00" height="55" fill="#000"/><rect x="354.00" y="593" width="1.50" height="55" fill="#000"/><rect x="358.50" y="593" width="3.00" height="55" fill="#000"/><rect x="363.00" y="593" width="6.00" height="55" fill="#000"/><rect x="370.50" y="593" width="3.00" height="55" fill="#000"/><rect x="375.00" y="593" width="1.50" height="55" fill="#000"/><rect x="378.00" y="593" width="3.00" height="55" fill="#000"/><rect x="384.00" y="593" width="4.50" height="55" fill="#000"/><rect x="391.50" y="593" width="4.50" height="55" fill="#000"/><rect x="397.50" y="593" width="1.50" height="55" fill="#000"/><rect x="400.50" y="593" width="3.00" height="55" fill="#000"/><rect x="408.00" y="593" width="3.00" height="55" fill="#000"/><rect x="415.50" y="593" width="4.50" height="55" fill="#000"/><rect x="421.50" y="593" width="1.50" height="55" fill="#000"/><rect x="424.50" y="593" width="3.00" height="55" fill="#000"/></svg>
<div class="a" style="left:930px;top:173px;width:34px;height:650px;background:#fff"></div>
<div class="a" style="left:961px;top:215px;width:2px;height:608px;background:#c8c8c8"></div>
<div class="a" style="left:930px;top:215px;width:32px;height:1px;background:#c8c8c8"></div>
<div class="a" style="left:930px;top:175px;width:9px;height:648px;background:linear-gradient(90deg,#9a9a9a,#c8c8c8 45%,#f0f0f0)"></div>
<div class="a" style="left:939px;top:175px;width:1px;height:648px;background:repeating-linear-gradient(#f4c8d0 0 1px,transparent 1px 3px)"></div>
<div class="a" style="left:1px;top:823px;width:963px;height:3px;background:#fff"></div>
<div class="a" style="left:1px;top:826px;width:963px;height:22px;background:#c2d5f1"></div>
<div class="a" style="left:0px;top:848px;width:965px;height:1px;background:#3c3c3c"></div>
<div class="a" style="left:959px;top:835px;width:2px;height:2px;background:#8a8a8a"></div>
<div class="a" style="left:955px;top:839px;width:2px;height:2px;background:#8a8a8a"></div>
<div class="a" style="left:959px;top:839px;width:2px;height:2px;background:#8a8a8a"></div>
<div class="a" style="left:951px;top:843px;width:2px;height:2px;background:#8a8a8a"></div>
<div class="a" style="left:955px;top:843px;width:2px;height:2px;background:#8a8a8a"></div>
<div class="a" style="left:959px;top:843px;width:2px;height:2px;background:#8a8a8a"></div>
<div class="a" style="left:0px;top:0px;width:965px;height:1px;background:#3c3c3c"></div>
<div class="a" style="left:0px;top:0px;width:1px;height:849px;background:#3c3c3c"></div>
<div class="a" style="left:964px;top:0px;width:1px;height:849px;background:#3c3c3c"></div>
<div class="a" style="left:312px;top:172px;width:618px;height:648px;background:#f3f7fe;border:1px solid #4a4a4a;box-shadow:0 2px 9px 1px rgba(0,0,0,0.32)"></div>
<div class="a" style="left:313px;top:173px;width:616px;height:24px;background:#fff"></div>
<svg class="a" style="left:316px;top:177px;" width="16" height="16" viewBox="0 0 16 16"><path d="M1 4.5C1 2.5 3 2 5 2.5L8 1.5C11 0 14 0.5 15 3L15.6 12C15.6 14.5 13.5 15.8 11 15.8H4C2 15.8 0.6 14.5 0.6 12.5Z" fill="#eaa52c"/>
<path d="M6 2.5C8 0.5 13 0 14.5 2.5 15.5 4.5 15 6.5 13 7L7 6.5Z" fill="#c9861e"/><rect x="1.5" y="6" width="2.5" height="6" fill="#8aa0b8" opacity="0.7"/>
<circle cx="2.6" cy="1.8" r="1.5" fill="#555"/><circle cx="5" cy="5.3" r="1" fill="#a02020"/><circle cx="6.5" cy="3.8" r="0.7" fill="#1a8a1a"/>
<circle cx="7.9" cy="11.3" r="5" fill="#e81818"/><circle cx="7.9" cy="11.3" r="3.9" fill="#fff"/>
<path d="M6.6 8H9.2V10H11.2V12.6H9.2V14.6H6.6V12.6H4.6V10H6.6Z" fill="#f40f0f"/></svg>
<div class="t" style="left:336.00px;top:177.47px;font:normal 12.03px 'Liberation Sans';color:#000;transform:scaleX(0.8945);">Barcode Properties</div>
<svg class="a" style="left:910px;top:179px;" width="11" height="11" viewBox="0 0 11 11"><path d="M0.5 0.5L10.5 10.5M10.5 0.5L0.5 10.5" stroke="#000" stroke-width="1.1"/></svg>
<div class="a" style="left:322px;top:204px;width:596px;height:87px;background:#fff"></div>
<div class="a" style="left:323px;top:210px;width:595px;height:80px;border:1px solid #c9c9c9"></div>
<div class="a" style="left:328px;top:204px;width:232px;height:12px;background:#fff"></div>
<div class="t" style="left:331.60px;top:204.89px;font:normal 10.72px 'Liberation Sans';color:#000;transform:scaleX(1.1110);">Select the Barcode Technologies and Type</div>
<div class="a" style="left:331px;top:223px;width:124px;height:22px;border:2px solid #ee1111;box-shadow:1px 2px 3px rgba(0,0,0,0.25)"></div>
<svg class="a" style="left:337px;top:227px;" width="13" height="13" viewBox="0 0 13 13"><circle cx="6.5" cy="6.5" r="5.9" fill="#fff" stroke="#333" stroke-width="1.1"/><circle cx="6.5" cy="6.5" r="3.3" fill="#1a1a1a"/></svg>
<div class="t" style="left:355.60px;top:227.95px;font:bold 11.59px 'Liberation Sans';color:#1010e6;transform:scaleX(1.0748);">Linear Barcode</div>
<svg class="a" style="left:467px;top:227px;" width="13" height="13" viewBox="0 0 13 13"><circle cx="6.5" cy="6.5" r="5.9" fill="#fff" stroke="#333" stroke-width="1.1"/></svg>
<div class="t" style="left:486.10px;top:227.95px;font:bold 11.59px 'Liberation Sans';color:#1010e6;transform:scaleX(1.0584);">2D Barcode</div>
<div class="t" style="left:343.50px;top:249.31px;font:normal 10.58px 'Liberation Sans';color:#000;transform:scaleX(1.1292);">Select Barcode Font :</div>
<div class="a" style="left:359px;top:266px;width:180px;height:19px;background:#cccccc;border:1px solid #a5a5a5"></div>
<svg class="a" style="left:526px;top:273.5px;" width="9" height="5" viewBox="0 0 9 5"><path d="M0.5 0.5L4.5 4.3 8.5 0.5" stroke="#333" fill="none" stroke-width="1"/></svg>
<div class="a" style="left:352px;top:263px;width:192px;height:26px;border:2px solid #ee1111;box-shadow:1px 2px 3px rgba(0,0,0,0.25)"></div>
<div class="t" style="left:363.00px;top:270.15px;font:normal 11.59px 'Liberation Sans';color:#000;">Code 128 Font</div>
<div class="t" style="left:654.40px;top:229.90px;font:normal 11.3px 'Liberation Sans';color:#000;transform:scaleX(1.0596);">Measurement Unit :</div>
<div class="a" style="left:768px;top:227px;width:125px;height:20px;background:#cccccc;border:1px solid #a5a5a5"></div>
<svg class="a" style="left:879px;top:235.0px;" width="9" height="5" viewBox="0 0 9 5"><path d="M0.5 0.5L4.5 4.3 8.5 0.5" stroke="#333" fill="none" stroke-width="1"/></svg>
<div class="t" style="left:772.20px;top:230.56px;font:normal 12.75px 'Liberation Sans';color:#000;transform:scaleX(0.9619);">Centimeters (cm)</div>
<div class="a" style="left:322px;top:298px;width:596px;height:353px;background:#fff"></div>
<div class="a" style="left:323px;top:304px;width:595px;height:347px;border:1px solid #c9c9c9"></div>
<div class="a" style="left:326px;top:326px;width:587px;height:319px;border:1px solid #cdcdcd;border-right:2px solid #d0d0d0;border-bottom:2px solid #cfcfcf"></div>
<div class="a" style="left:374px;top:309px;width:45px;height:18px;background:#dedede;border:1px solid #c4c4c4"></div>
<div class="t" style="left:378.40px;top:312.93px;font:normal 10.43px 'Liberation Sans';color:#000;transform:scaleX(1.0792);">Size</div>
<div class="a" style="left:418px;top:309px;width:46px;height:18px;background:#dedede;border:1px solid #c4c4c4"></div>
<div class="t" style="left:423.30px;top:312.93px;font:normal 10.43px 'Liberation Sans';color:#000;transform:scaleX(1.0879);">Font</div>
<div class="a" style="left:463px;top:309px;width:44px;height:18px;background:#dedede;border:1px solid #c4c4c4"></div>
<div class="t" style="left:468.60px;top:312.93px;font:normal 10.43px 'Liberation Sans';color:#000;transform:scaleX(1.1441);">Color</div>
<div class="a" style="left:326px;top:307px;width:49px;height:21px;background:#fff;border:1px solid #c8c8c8;border-bottom:none"></div>
<div class="t" style="left:334.40px;top:311.13px;font:normal 10.43px 'Liberation Sans';color:#000;transform:scaleX(1.0657);">Value</div>
<div class="a" style="left:322px;top:304px;width:191px;height:30px;border:2px solid #ee1111;box-shadow:1px 2px 3px rgba(0,0,0,0.25)"></div>
<div class="t" style="left:359.70px;top:353.16px;font:normal 10.87px 'Liberation Sans';color:#000;transform:scaleX(1.1042);">Data Source :</div>
<svg class="a" style="left:465px;top:349px;" width="13" height="13" viewBox="0 0 13 13"><circle cx="6.5" cy="6.5" r="5.9" fill="#fff" stroke="#333" stroke-width="1.1"/><circle cx="6.5" cy="6.5" r="3.3" fill="#1a1a1a"/></svg>
<div class="t" style="left:483.40px;top:350.24px;font:normal 11.01px 'Liberation Sans';color:#000;transform:scaleX(1.0468);">Manual</div>
<svg class="a" style="left:526px;top:349px;" width="13" height="13" viewBox="0 0 13 13"><circle cx="6.5" cy="6.5" r="5.9" fill="#fff" stroke="#333" stroke-width="1.1"/></svg>
<div class="t" style="left:544.90px;top:350.21px;font:normal 11.16px 'Liberation Sans';color:#000;transform:scaleX(1.0504);">Batch Processing Series</div>
<div class="a" style="left:679px;top:348px;width:20px;height:19px;background:#c8c8c8;border:1px solid #9a9a9a"></div>
<svg class="a" style="left:681px;top:349px;" width="16" height="17" viewBox="0 0 16 17"><defs><radialGradient id="ghelp" cx="0.4" cy="0.35" r="0.7"><stop offset="0" stop-color="#6aa8ff"/><stop offset="1" stop-color="#0c3fb8"/></radialGradient></defs><circle cx="8" cy="8.5" r="7" fill="url(#ghelp)" stroke="#0a2a80" stroke-width="0.6"/><text x="8" y="13" text-anchor="middle" font-family="Liberation Sans" font-weight="bold" font-size="11" fill="#fff">?</text></svg>
<div class="a" style="left:712px;top:358px;width:190px;height:77px;border:1px solid #cfcfcf"></div>
<div class="a" style="left:717px;top:352px;width:48px;height:10px;background:#fff"></div>
<div class="t" style="left:720.20px;top:352.31px;font:normal 11.16px 'Liberation Sans';color:#000;transform:scaleX(1.0396);">Auto Fill</div>
<div class="a" style="left:718px;top:377px;width:81px;height:20px;background:#cccccc;border:1px solid #a6a6a6"></div>
<div class="t" style="left:726.76px;top:382.44px;font:normal 11.01px 'Liberation Sans';color:#000;transform:scaleX(1.1351);">Insert Date</div>
<div class="a" style="left:802px;top:378px;width:95px;height:20px;background:#cccccc;border:1px solid #a5a5a5"></div>
<svg class="a" style="left:884px;top:386.0px;" width="9" height="5" viewBox="0 0 9 5"><path d="M0.5 0.5L4.5 4.3 8.5 0.5" stroke="#333" fill="none" stroke-width="1"/></svg>
<div class="t" style="left:804.97px;top:382.26px;font:normal 12.17px 'Liberation Sans';color:#000;transform:scaleX(1.0297);">M/d/yyyy</div>
<div class="a" style="left:718px;top:402px;width:81px;height:20px;background:#cccccc;border:1px solid #a6a6a6"></div>
<div class="t" style="left:725.55px;top:406.64px;font:normal 11.01px 'Liberation Sans';color:#000;transform:scaleX(1.1461);">Insert Time</div>
<div class="a" style="left:802px;top:402px;width:95px;height:20px;background:#cccccc;border:1px solid #a5a5a5"></div>
<svg class="a" style="left:884px;top:410.0px;" width="9" height="5" viewBox="0 0 9 5"><path d="M0.5 0.5L4.5 4.3 8.5 0.5" stroke="#333" fill="none" stroke-width="1"/></svg>
<div class="t" style="left:806.00px;top:406.64px;font:normal 11.01px 'Liberation Sans';color:#000;transform:scaleX(1.1585);">h:mm:ss tt</div>
<div class="t" style="left:359.70px;top:398.75px;font:normal 11.59px 'Liberation Sans';color:#000;transform:scaleX(1.0282);">Barcode Value :</div>
<div class="a" style="left:465px;top:395px;width:242px;height:20px;background:#fff;border:1px solid #7a7a7a"></div>
<div class="t" style="left:468.40px;top:399.49px;font:normal 10.72px 'Liberation Sans';color:#000;transform:scaleX(1.1010);">123456789012</div>
<div class="a" style="left:465px;top:422px;width:12px;height:12px;background:#fff;border:1px solid #c4c4c4"></div>
<div class="t" style="left:482.80px;top:422.62px;font:normal 11.74px 'Liberation Sans';color:#6d6d6d;transform:scaleX(1.0115);">Add Checksum</div>
<div class="a" style="left:593px;top:422px;width:12px;height:12px;background:#fff;border:1px solid #c4c4c4"></div>
<div class="t" style="left:611.20px;top:422.62px;font:normal 11.74px 'Liberation Sans';color:#6d6d6d;transform:scaleX(1.0095);">Show Checksum</div>
<div class="t" style="left:359.30px;top:446.69px;font:normal 11.3px 'Liberation Sans';color:#000;transform:scaleX(1.0554);">Barcode Header :</div>
<div class="a" style="left:465px;top:443px;width:242px;height:20px;background:#fff;border:1px solid #7a7a7a"></div>
<div class="t" style="left:359.30px;top:472.24px;font:normal 11.01px 'Liberation Sans';color:#000;transform:scaleX(1.0760);">Barcode Footer :</div>
<div class="a" style="left:465px;top:468px;width:242px;height:20px;background:#fff;border:1px solid #7a7a7a"></div>
<div class="a" style="left:465px;top:498px;width:12px;height:12px;background:#fff;border:1px solid #333"></div>
<div class="t" style="left:482.60px;top:499.51px;font:normal 11.16px 'Liberation Sans';color:#000;transform:scaleX(1.0523);">Hide Barcode Header</div>
<div class="a" style="left:465px;top:519px;width:12px;height:12px;background:#fff;border:1px solid #333"></div>
<div class="t" style="left:482.60px;top:519.81px;font:normal 11.16px 'Liberation Sans';color:#000;transform:scaleX(1.0521);">Hide Barcode Footer</div>
<div class="a" style="left:621px;top:498px;width:12px;height:12px;background:#fff;border:1px solid #333"></div>
<div class="t" style="left:639.70px;top:499.51px;font:normal 11.16px 'Liberation Sans';color:#000;transform:scaleX(1.0479);">Hide Barcode Value</div>
<div class="a" style="left:621px;top:519px;width:12px;height:12px;background:#fff;border:1px solid #333"></div>
<div class="t" style="left:639.70px;top:519.81px;font:normal 11.16px 'Liberation Sans';color:#000;transform:scaleX(1.0593);">Show Barcode Value in Top</div>
<div class="t" style="left:359.60px;top:549.85px;font:normal 11.59px 'Liberation Sans';color:#000;transform:scaleX(1.0630);">Bearer Bar (Vertical) :</div>
<div class="t" style="left:359.60px;top:572.15px;font:normal 11.59px 'Liberation Sans';color:#000;transform:scaleX(1.0555);">Bearer Bar (Horizontal) :</div>
<div class="t" style="left:359.60px;top:594.25px;font:normal 11.59px 'Liberation Sans';color:#000;transform:scaleX(1.0315);">Narrow to Wide Ratio :</div>
<div class="t" style="left:359.60px;top:617.05px;font:normal 11.59px 'Liberation Sans';color:#000;transform:scaleX(1.0417);">Character Grouping :</div>
<div class="a" style="left:500px;top:544px;width:55px;height:20px;background:#fff;border:1px solid #8a8a8a"></div>
<div class="a" style="left:540px;top:545px;width:14px;height:9.0px;background:#e6e6e6;border:1px solid #b8b8b8"></div>
<div class="a" style="left:540px;top:554.0px;width:14px;height:9.0px;background:#e6e6e6;border:1px solid #b8b8b8"></div>
<svg class="a" style="left:544px;top:548px;" width="7" height="4" viewBox="0 0 7 4"><path d="M0 4H7L3.5 0Z" fill="#222"/></svg>
<svg class="a" style="left:544px;top:556.5px;" width="7" height="4" viewBox="0 0 7 4"><path d="M0 0H7L3.5 4Z" fill="#222"/></svg>
<div class="t" style="left:502.30px;top:547.21px;font:normal 11.16px 'Liberation Sans';color:#000;transform:scaleX(1.1565);">0.0</div>
<div class="a" style="left:500px;top:567px;width:55px;height:19px;background:#fff;border:1px solid #8a8a8a"></div>
<div class="a" style="left:540px;top:568px;width:14px;height:8.5px;background:#e6e6e6;border:1px solid #b8b8b8"></div>
<div class="a" style="left:540px;top:576.5px;width:14px;height:8.5px;background:#e6e6e6;border:1px solid #b8b8b8"></div>
<svg class="a" style="left:544px;top:571px;" width="7" height="4" viewBox="0 0 7 4"><path d="M0 4H7L3.5 0Z" fill="#222"/></svg>
<svg class="a" style="left:544px;top:578.5px;" width="7" height="4" viewBox="0 0 7 4"><path d="M0 0H7L3.5 4Z" fill="#222"/></svg>
<div class="t" style="left:502.30px;top:569.71px;font:normal 11.16px 'Liberation Sans';color:#000;transform:scaleX(1.1565);">0.0</div>
<div class="a" style="left:500px;top:589px;width:55px;height:20px;background:#fff;border:1px solid #8a8a8a"></div>
<div class="a" style="left:540px;top:590px;width:14px;height:9.0px;background:#e6e6e6;border:1px solid #b8b8b8"></div>
<div class="a" style="left:540px;top:599.0px;width:14px;height:9.0px;background:#e6e6e6;border:1px solid #b8b8b8"></div>
<svg class="a" style="left:544px;top:593px;" width="7" height="4" viewBox="0 0 7 4"><path d="M0 4H7L3.5 0Z" fill="#222"/></svg>
<svg class="a" style="left:544px;top:601.5px;" width="7" height="4" viewBox="0 0 7 4"><path d="M0 0H7L3.5 4Z" fill="#222"/></svg>
<div class="t" style="left:502.30px;top:592.21px;font:normal 11.16px 'Liberation Sans';color:#000;transform:scaleX(1.1167);">2</div>
<div class="a" style="left:500px;top:612px;width:55px;height:20px;background:#cccccc;border:1px solid #a5a5a5"></div>
<svg class="a" style="left:541px;top:620.0px;" width="9" height="5" viewBox="0 0 9 5"><path d="M0.5 0.5L4.5 4.3 8.5 0.5" stroke="#333" fill="none" stroke-width="1"/></svg>
<div class="t" style="left:504.00px;top:615.71px;font:normal 11.16px 'Liberation Sans';color:#000;transform:scaleX(1.0833);">0</div>
<div class="t" style="left:621.90px;top:556.39px;font:normal 11.3px 'Liberation Sans';color:#000;transform:scaleX(1.0632);">Align Header  :</div>
<div class="t" style="left:621.90px;top:578.69px;font:normal 11.3px 'Liberation Sans';color:#000;transform:scaleX(1.0455);">Align Footer :</div>
<div class="t" style="left:621.90px;top:599.69px;font:normal 11.3px 'Liberation Sans';color:#000;transform:scaleX(1.0684);">Orientation :</div>
<div class="a" style="left:709px;top:553px;width:114px;height:19px;background:#cccccc;border:1px solid #a5a5a5"></div>
<svg class="a" style="left:810px;top:560.5px;" width="9" height="5" viewBox="0 0 9 5"><path d="M0.5 0.5L4.5 4.3 8.5 0.5" stroke="#333" fill="none" stroke-width="1"/></svg>
<div class="t" style="left:713.70px;top:557.61px;font:normal 11.16px 'Liberation Sans';color:#000;transform:scaleX(1.0157);">Center</div>
<div class="a" style="left:709px;top:575px;width:114px;height:20px;background:#cccccc;border:1px solid #a5a5a5"></div>
<svg class="a" style="left:810px;top:583.0px;" width="9" height="5" viewBox="0 0 9 5"><path d="M0.5 0.5L4.5 4.3 8.5 0.5" stroke="#333" fill="none" stroke-width="1"/></svg>
<div class="t" style="left:713.70px;top:580.01px;font:normal 11.16px 'Liberation Sans';color:#000;transform:scaleX(1.0157);">Center</div>
<div class="a" style="left:709px;top:596px;width:79px;height:19px;background:#cccccc;border:1px solid #a5a5a5"></div>
<svg class="a" style="left:775px;top:603.5px;" width="9" height="5" viewBox="0 0 9 5"><path d="M0.5 0.5L4.5 4.3 8.5 0.5" stroke="#333" fill="none" stroke-width="1"/></svg>
<div class="t" style="left:714.00px;top:601.51px;font:normal 11.16px 'Liberation Sans';color:#000;transform:scaleX(1.0833);">0</div>
<div class="a" style="left:568px;top:674px;width:110px;height:71px;background:#fff"></div>
<svg class="a" style="left:0px;top:0px;" width="965" height="849" viewBox="0 0 965 849"><rect x="574.10" y="681" width="1.89" height="35" fill="#000"/><rect x="576.93" y="681" width="0.94" height="35" fill="#000"/><rect x="579.76" y="681" width="2.83" height="35" fill="#000"/><rect x="584.48" y="681" width="0.94" height="35" fill="#000"/><rect x="586.37" y="681" width="1.89" height="35" fill="#000"/><rect x="590.14" y="681" width="2.83" height="35" fill="#000"/><rect x="594.86" y="681" width="0.94" height="35" fill="#000"/><rect x="598.63" y="681" width="0.94" height="35" fill="#000"/><rect x="600.52" y="681" width="1.89" height="35" fill="#000"/><rect x="605.24" y="681" width="2.83" height="35" fill="#000"/><rect x="610.90" y="681" width="0.94" height="35" fill="#000"/><rect x="612.79" y="681" width="1.89" height="35" fill="#000"/><rect x="615.62" y="681" width="0.94" height="35" fill="#000"/><rect x="619.39" y="681" width="1.89" height="35" fill="#000"/><rect x="623.17" y="681" width="0.94" height="35" fill="#000"/><rect x="626.00" y="681" width="1.89" height="35" fill="#000"/><rect x="628.83" y="681" width="3.77" height="35" fill="#000"/><rect x="633.54" y="681" width="1.89" height="35" fill="#000"/><rect x="636.38" y="681" width="0.94" height="35" fill="#000"/><rect x="638.26" y="681" width="1.89" height="35" fill="#000"/><rect x="642.04" y="681" width="2.83" height="35" fill="#000"/><rect x="646.75" y="681" width="2.83" height="35" fill="#000"/><rect x="650.53" y="681" width="0.94" height="35" fill="#000"/><rect x="652.42" y="681" width="1.89" height="35" fill="#000"/><rect x="657.13" y="681" width="1.89" height="35" fill="#000"/><rect x="661.85" y="681" width="2.83" height="35" fill="#000"/><rect x="665.63" y="681" width="0.94" height="35" fill="#000"/><rect x="667.51" y="681" width="1.89" height="35" fill="#000"/></svg>
<div class="t" style="left:588.11px;top:723.10px;font:normal 12.77px 'Liberation Serif';color:#000;transform:scaleX(0.8855);">123456789012</div>
<div class="a" style="left:756px;top:780px;width:78px;height:23px;background:#cccccc;border:2px solid #0a78d6"></div>
<div class="t" style="left:786.20px;top:785.92px;font:normal 11.74px 'Liberation Sans';color:#000;transform:scaleX(0.9283);">OK</div>
<div class="a" style="left:843px;top:780px;width:77px;height:23px;background:#cccccc;border:1px solid #adadad"></div>
<div class="t" style="left:862.30px;top:785.92px;font:normal 11.74px 'Liberation Sans';color:#000;transform:scaleX(1.0162);">Cancel</div>
</body></html>
